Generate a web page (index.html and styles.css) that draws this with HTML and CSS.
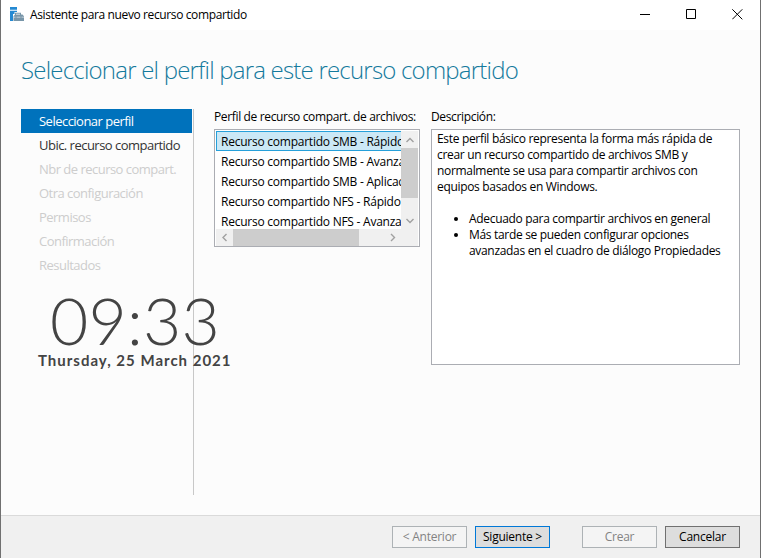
FILE: index.html
```html
<!DOCTYPE html>
<html lang="es">
<head>
<meta charset="utf-8">
<title>Asistente para nuevo recurso compartido</title>
<link rel="stylesheet" href="styles.css">
</head>
<body>
<div class="window">
  <header class="titlebar">
    <svg class="app-icon" width="14" height="14" viewBox="0 0 14 14">
      <path fill="#2489d2" d="M0 0h7v2.700H0zM0 3.700h7v1.300H4.500v2H3v7H0z"/>
      <path fill="#7896a9" d="M5 7.500V5.700h6v1.800h1.500L14 9.200V14H3.500V9.200L5 7.500zM6 6.700v.8h4v-.8z"/>
      <path fill="#fff" fill-opacity=".75" d="M3.500 9.800h2v.8h-2zM6.500 9.800h4v.8h-4zM11.500 9.800H14v.8h-2.500z"/>
    </svg>
    <span class="title">Asistente para nuevo recurso compartido</span>
    <div class="controls">
      <svg width="11" height="11" viewBox="0 0 11 11"><path d="M0 5.500h10"/></svg>
      <svg width="11" height="11" viewBox="0 0 11 11"><path d="M.5.5h9v9h-9z"/></svg>
      <svg width="11" height="11" viewBox="0 0 11 11"><path d="M.3.3l10 10M10.300.3l-10 10"/></svg>
    </div>
  </header>
  <main class="content">
    <h1>Seleccionar el perfil para este recurso compartido</h1>
    <div class="columns">
      <nav class="steps">
        <div class="step active">Seleccionar perfil</div>
        <div class="step enabled">Ubic. recurso compartido</div>
        <div class="step">Nbr de recurso compart.</div>
        <div class="step">Otra configuración</div>
        <div class="step">Permisos</div>
        <div class="step">Confirmación</div>
        <div class="step">Resultados</div>
      </nav>
      <section class="profiles">
        <div class="label">Perfil de recurso compart. de archivos:</div>
        <div class="listbox">
          <div class="items">
            <div class="item selected">Recurso compartido SMB - Rápido</div>
            <div class="item">Recurso compartido SMB - Avanzado</div>
            <div class="item">Recurso compartido SMB - Aplicaciones</div>
            <div class="item">Recurso compartido NFS - Rápido</div>
            <div class="item">Recurso compartido NFS - Avanzado</div>
          </div>
          <div class="vbar">
            <svg width="17" height="17"><path d="M5.500 11l3.500-3.500 3.500 3.500"/></svg>
            <div class="vthumb"></div>
            <svg width="17" height="17"><path d="M5.500 7L9 10.500 12.500 7"/></svg>
          </div>
          <div class="hbar">
            <svg width="17" height="17"><path d="M10.500 5L7 8.500l3.500 3.500"/></svg>
            <div class="hthumb"></div>
            <svg width="17" height="17"><path d="M7 5l3.500 3.500L7 12"/></svg>
          </div>
          <div class="corner"></div>
        </div>
      </section>
      <section class="details">
        <div class="label">Descripción:</div>
        <div class="description">
          <p>Este perfil básico representa la forma más rápida de<br>crear un recurso compartido de archivos SMB y<br>normalmente se usa para compartir archivos con<br>equipos basados en Windows.</p>
          <ul>
            <li>Adecuado para compartir archivos en general</li>
            <li>Más tarde se pueden configurar opciones<br>avanzadas en el cuadro de diálogo Propiedades</li>
          </ul>
        </div>
      </section>
    </div>
    <div class="clock">
      <div class="time">09:33</div>
      <div class="date">Thursday, 25 March 2021</div>
    </div>
  </main>
  <footer class="footer">
    <button class="disabled" disabled>&lt; Anterior</button>
    <button class="default">Siguiente &gt;</button>
    <button class="disabled" disabled>Crear</button>
    <button>Cancelar</button>
  </footer>
</div>
</body>
</html>
```
FILE: styles.css
```css
* { box-sizing: border-box; }
body {
  margin: 0;
  overflow: hidden;
  font: 12px/16px "Open Sans", "Noto Sans", sans-serif;
  letter-spacing: -0.24px;
  color: #000;
}
.window {
  display: flex;
  flex-direction: column;
  width: 761px;
  height: 558px;
  border: solid #707070;
  border-width: 0 1px;
  background: #fcfcfc;
}
.titlebar {
  display: flex;
  align-items: center;
  height: 30px;
  padding-left: 9px;
  background: #fff;
}
.app-icon { position: relative; top: -1px; }
.title { margin-left: 6px; letter-spacing: -0.38px; white-space: nowrap; }
.controls {
  display: flex;
  gap: 35px;
  margin: -1px 0 0 auto;
  padding-right: 17px;
}
.controls svg { fill: none; stroke: #000; stroke-width: 1; }
.content { position: relative; flex: 1; padding: 22px 20px 0; }
h1 {
  height: 36px;
  margin: 0 0 21px;
  font-size: 24px;
  font-weight: 300;
  line-height: 35px;
  letter-spacing: -0.79px;
  color: #147a9c;
  white-space: nowrap;
}
.columns { display: flex; }
.steps {
  width: 173px;
  height: 386px;
  padding-right: 1px;
  border-right: 1px solid #c8c8c8;
  font-size: 13px;
  letter-spacing: -0.52px;
}
.step {
  height: 24px;
  padding-left: 18px;
  line-height: 24px;
  color: #cdcdcd;
  white-space: nowrap;
}
.step.active { background: #0072bc; color: #fff; }
.step.enabled { color: #333; }
.profiles { width: 206px; margin-left: 20px; }
.label { height: 20px; letter-spacing: -0.35px; white-space: nowrap; }
.listbox {
  display: grid;
  grid-template: 98px 17px / 185px 17px;
  width: 206px;
  height: 118px;
  padding: 1px;
  border: 1px solid #abadb3;
  background: #fff;
}
.items { overflow: hidden; }
.item {
  width: 260px;
  height: 20px;
  padding-left: 5px;
  line-height: 22px;
  white-space: nowrap;
}
.item.selected {
  width: 240px;
  padding-left: 4px;
  border: 1px solid #26a0da;
  background: #cbe8f6;
  line-height: 20px;
}
.vbar { display: flex; flex-direction: column; background: #f0f0f0; }
.vthumb { flex: none; height: 50px; margin-bottom: 14px; background: #cdcdcd; }
.hbar { display: flex; background: #f0f0f0; }
.hthumb { width: 126px; margin-right: 25px; background: #cdcdcd; }
.vbar svg, .hbar svg { flex: none; fill: none; stroke: #a0a0a0; stroke-width: 1.4; }
.corner { background: #f0f0f0; }
.details { margin-left: 11px; }
.description {
  width: 309px;
  height: 236px;
  padding: 1px 5px;
  border: 1px solid #abadb3;
  background: #fff;
  letter-spacing: -0.32px;
  white-space: nowrap;
}
.description p { margin: 0 0 16px; }
.description ul { margin: 0; padding-left: 32px; }
.clock { position: absolute; left: 37px; top: 257px; color: #444; white-space: nowrap; }
.time {
  height: 64px;
  padding-left: 12px;
  font: 300 66px/66px Lato, sans-serif;
  letter-spacing: 0.2px;
}
.date {
  font: 700 15px/18px Lato, sans-serif;
  letter-spacing: 1px;
}
.footer {
  display: flex;
  justify-content: flex-end;
  gap: 8px;
  height: 43px;
  padding: 10px 20px 0 0;
  border-top: 1px solid #dadada;
  background: #f0f0f0;
}
button {
  width: 75px;
  height: 22px;
  padding: 0;
  border: 1px solid #707070;
  background: #ddd;
  color: #000;
  font: inherit;
  letter-spacing: inherit;
}
button.default { margin-right: 24px; border-color: #0078d7; }
button.disabled { border-color: #adb2b5; background: #f4f4f4; color: #838383; }
```
